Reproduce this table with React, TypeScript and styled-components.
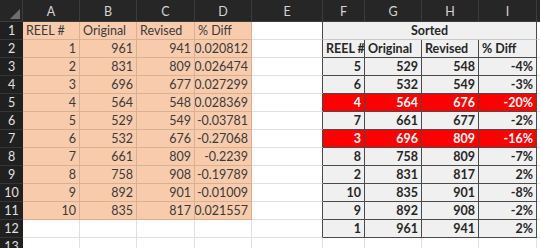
import { FC } from "react"
import styled, { createGlobalStyle, css } from "styled-components"

type TFill = "none" | "peach" | "gray" | "red"

type TRow = { reel: number; original: number; revised: number; diff: string }

const rawRows: Array<TRow> = [
  { reel: 1, original: 961, revised: 941, diff: "0.020812" },
  { reel: 2, original: 831, revised: 809, diff: "0.026474" },
  { reel: 3, original: 696, revised: 677, diff: "0.027299" },
  { reel: 4, original: 564, revised: 548, diff: "0.028369" },
  { reel: 5, original: 529, revised: 549, diff: "-0.03781" },
  { reel: 6, original: 532, revised: 676, diff: "-0.27068" },
  { reel: 7, original: 661, revised: 809, diff: "-0.2239" },
  { reel: 8, original: 758, revised: 908, diff: "-0.19789" },
  { reel: 9, original: 892, revised: 901, diff: "-0.01009" },
  { reel: 10, original: 835, revised: 817, diff: "0.021557" },
]

const sortedRows: Array<TRow & { hot?: boolean }> = [
  { reel: 5, original: 529, revised: 548, diff: "-4%" },
  { reel: 6, original: 532, revised: 549, diff: "-3%" },
  { reel: 4, original: 564, revised: 676, diff: "-20%", hot: true },
  { reel: 7, original: 661, revised: 677, diff: "-2%" },
  { reel: 3, original: 696, revised: 809, diff: "-16%", hot: true },
  { reel: 8, original: 758, revised: 809, diff: "-7%" },
  { reel: 2, original: 831, revised: 817, diff: "2%" },
  { reel: 10, original: 835, revised: 901, diff: "-8%" },
  { reel: 9, original: 892, revised: 908, diff: "-2%" },
  { reel: 1, original: 961, revised: 941, diff: "2%" },
]

const letters = ["A", "B", "C", "D", "E", "F", "G", "H", "I", ""]

const App: FC = () => {
  const rows = []
  for (let r = 1; r <= 13; r++) {
    const cells = []
    cells.push(<RowHead key="h">{r}</RowHead>)

    // left table A-D
    if (r === 1) {
      ;["REEL #", "Original", "Revised", "% Diff"].forEach((t) =>
        cells.push(
          <Cell key={t} $fill="peach" $align="left">
            {t}
          </Cell>
        )
      )
    } else if (r <= 11) {
      const d = rawRows[r - 2]
      ;[d.reel, d.original, d.revised, d.diff].forEach((v, i) =>
        cells.push(
          <Cell key={i} $fill="peach">
            {v}
          </Cell>
        )
      )
    } else {
      for (let i = 0; i < 4; i++) cells.push(<Cell key={i} $fill="none" />)
    }

    // column E
    cells.push(<Cell key="e" $fill="none" $edge={r <= 12} />)

    // sorted table F-I
    if (r === 1) {
      cells.push(
        <Title key="s">Sorted</Title>
      )
    } else if (r === 2) {
      ;["REEL #", "Original", "Revised", "% Diff"].forEach((t) =>
        cells.push(
          <Cell key={"s" + t} $fill="gray" $align="left" $bold $boxed>
            {t}
          </Cell>
        )
      )
    } else if (r <= 12) {
      const d = sortedRows[r - 3]
      ;[d.reel, d.original, d.revised, d.diff].forEach((v, i) =>
        cells.push(
          <Cell key={"s" + i} $fill={d.hot ? "red" : "gray"} $bold $boxed>
            {v}
          </Cell>
        )
      )
    } else {
      for (let i = 0; i < 4; i++) cells.push(<Cell key={"s" + i} $fill="none" />)
    }

    cells.push(<Cell key="j" $fill="none" />)
    rows.push(cells)
  }

  return (
    <>
      <GlobalStyle />
      <Sheet>
        <Corner>
          <svg width="10" height="10" viewBox="0 0 10 10">
            <polygon points="10,0 10,10 0,10" fill="#6e6e6e" />
          </svg>
        </Corner>
        {letters.map((l, i) => (
          <ColHead key={i}>{l}</ColHead>
        ))}
        {rows}
      </Sheet>
    </>
  )
}

export default App

//Styled Components

const GlobalStyle = createGlobalStyle`
  html, body {
    margin: 0;
    padding: 0;
    background: #ffffff;
    overflow: hidden;
  }
  body {
    font-family: Lato, "Open Sans", sans-serif;
  }
`

const Sheet = styled.div`
  display: grid;
  grid-template-columns: 23px 57px 57px 58px 57px 71px 42px 57px 57px 58px 1fr;
  grid-template-rows: 22px repeat(13, 18px);
  width: 540px;
  height: 248px;
  overflow: hidden;
  font-size: 12.5px;
  background: #ffffff;
`

const Corner = styled.div`
  background: #262626;
  border-right: 1px solid #3c3c3c;
  border-bottom: 1px solid #3c3c3c;
  display: flex;
  align-items: flex-end;
  justify-content: flex-end;
  padding: 0 2px 2px 0;
`

const ColHead = styled.div`
  background: #262626;
  color: #d4d4d4;
  border-right: 1px solid #3c3c3c;
  border-bottom: 1px solid #3c3c3c;
  display: flex;
  align-items: center;
  justify-content: center;
  padding-top: 2px;
`

const RowHead = styled.div`
  background: #202020;
  color: #e2e2e2;
  border-bottom: 1px solid #353535;
  display: flex;
  align-items: center;
  justify-content: center;
`

const fills = {
  none: css`
    background: #ffffff;
    border-color: #e0e0e0;
  `,
  peach: css`
    background: #f8cbad;
    border-color: #d8b193;
    color: #3a3a3a;
  `,
  gray: css`
    background: #f0f0f0;
    color: #262626;
  `,
  red: css`
    background: #ff0000;
    color: #ffffff;
  `,
}

const Cell = styled.div<{ $fill: TFill; $align?: "left" | "right"; $bold?: boolean; $boxed?: boolean; $edge?: boolean }>`
  border-right: 1px solid;
  border-bottom: 1px solid;
  display: flex;
  align-items: center;
  justify-content: ${(p) => (p.$align === "left" ? "flex-start" : "flex-end")};
  padding: 0 3px;
  white-space: nowrap;
  overflow: hidden;
  font-weight: ${(p) => (p.$bold ? 700 : 400)};
  ${(p) => fills[p.$fill]}
  ${(p) =>
    p.$boxed &&
    css`
      border-color: #4a4a4a;
    `}
  ${(p) =>
    p.$edge &&
    css`
      border-right-color: #4a4a4a;
    `}
`

const Title = styled.div`
  grid-column: span 4;
  background: #f0f0f0;
  color: #262626;
  font-weight: 700;
  border-right: 1px solid #4a4a4a;
  border-bottom: 1px solid #c8c8c8;
  display: flex;
  align-items: center;
  justify-content: center;
`
